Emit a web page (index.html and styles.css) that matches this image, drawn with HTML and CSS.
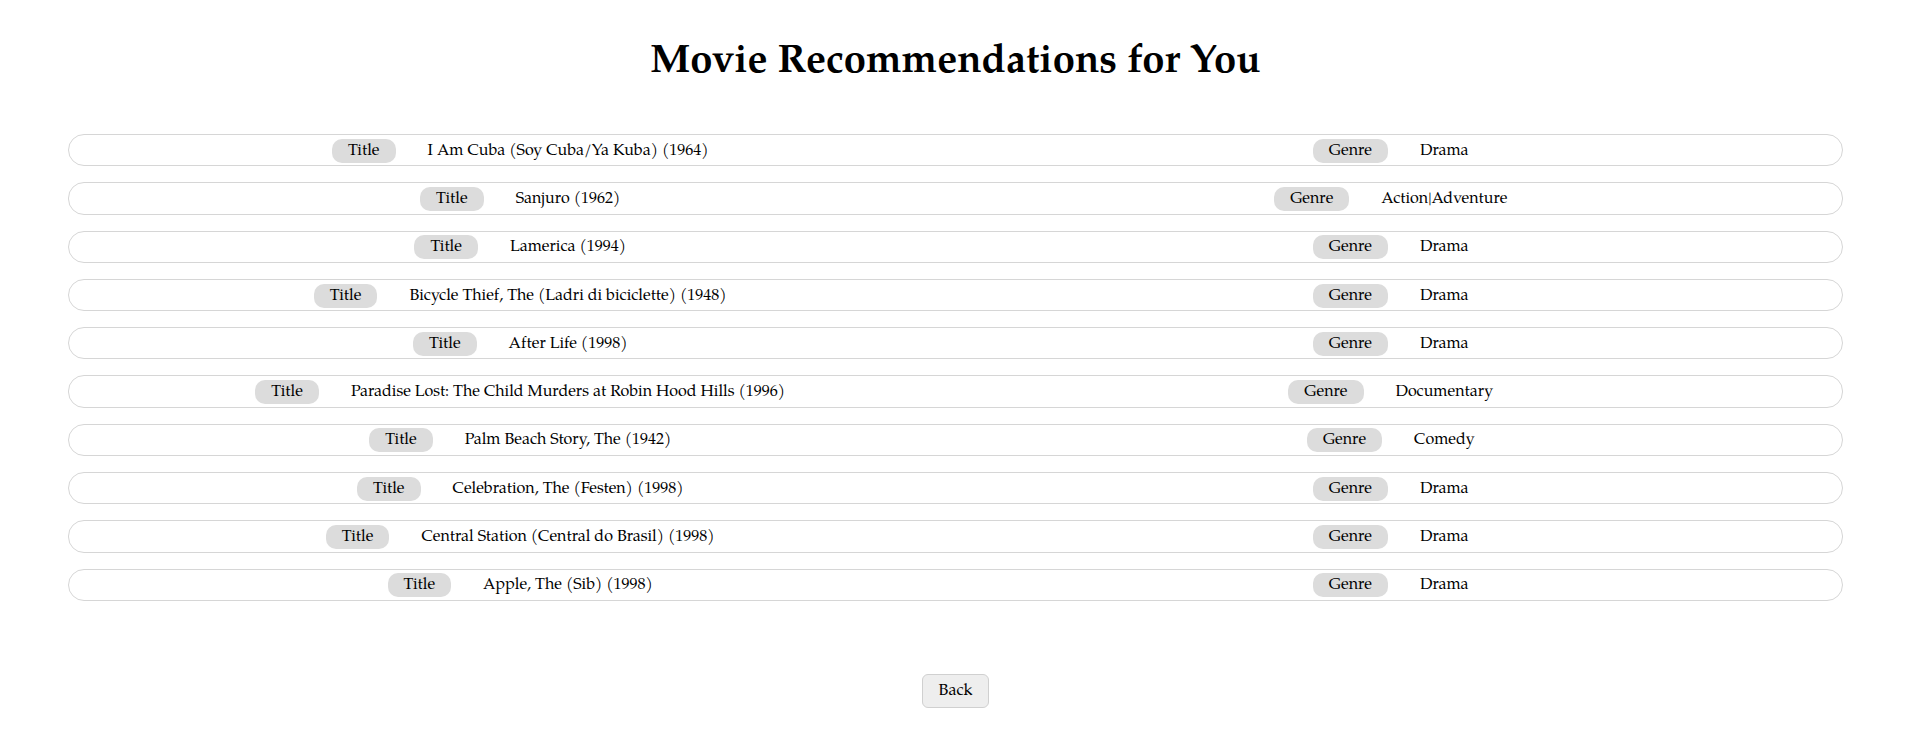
FILE: index.html
```html
<!DOCTYPE html>
<html lang="en">
<head>
<meta charset="utf-8">
<title>Movie Recommendations</title>
<link rel="stylesheet" href="styles.css">
</head>
<body>
<main class="page">
  <h1 class="heading">Movie Recommendations for You</h1>
  <ul class="list">
    <li class="row"><div class="cell"><span class="pill">Title</span><span class="value">I Am Cuba (Soy Cuba/Ya Kuba) (1964)</span></div><div class="cell"><span class="pill">Genre</span><span class="value">Drama</span></div></li>
    <li class="row"><div class="cell"><span class="pill">Title</span><span class="value">Sanjuro (1962)</span></div><div class="cell"><span class="pill">Genre</span><span class="value">Action|Adventure</span></div></li>
    <li class="row"><div class="cell"><span class="pill">Title</span><span class="value">Lamerica (1994)</span></div><div class="cell"><span class="pill">Genre</span><span class="value">Drama</span></div></li>
    <li class="row"><div class="cell"><span class="pill">Title</span><span class="value">Bicycle Thief, The (Ladri di biciclette) (1948)</span></div><div class="cell"><span class="pill">Genre</span><span class="value">Drama</span></div></li>
    <li class="row"><div class="cell"><span class="pill">Title</span><span class="value">After Life (1998)</span></div><div class="cell"><span class="pill">Genre</span><span class="value">Drama</span></div></li>
    <li class="row"><div class="cell"><span class="pill">Title</span><span class="value">Paradise Lost: The Child Murders at Robin Hood Hills (1996)</span></div><div class="cell"><span class="pill">Genre</span><span class="value">Documentary</span></div></li>
    <li class="row"><div class="cell"><span class="pill">Title</span><span class="value">Palm Beach Story, The (1942)</span></div><div class="cell"><span class="pill">Genre</span><span class="value">Comedy</span></div></li>
    <li class="row"><div class="cell"><span class="pill">Title</span><span class="value">Celebration, The (Festen) (1998)</span></div><div class="cell"><span class="pill">Genre</span><span class="value">Drama</span></div></li>
    <li class="row"><div class="cell"><span class="pill">Title</span><span class="value">Central Station (Central do Brasil) (1998)</span></div><div class="cell"><span class="pill">Genre</span><span class="value">Drama</span></div></li>
    <li class="row"><div class="cell"><span class="pill">Title</span><span class="value">Apple, The (Sib) (1998)</span></div><div class="cell"><span class="pill">Genre</span><span class="value">Drama</span></div></li>
  </ul>
  <div class="actions"><button class="back" type="button">Back</button></div>
</main>
</body>
</html>
```
FILE: styles.css
```css
html, body {
  margin: 0;
  padding: 0;
  background: #fff;
}
body {
  font-family: "Palatino Linotype", Palatino, "P052", "TeX Gyre Pagella", "URW Palladio L", "Book Antiqua", "Liberation Serif", serif;
  color: #000;
}
.page {
  display: flex;
  flex-direction: column;
  padding: 0 72px 0 68px;
}
.heading {
  margin: 40px 0 0;
  height: 46px;
  line-height: 46px;
  text-align: center;
  font-size: 40px;
  font-weight: bold;
}
.list {
  list-style: none;
  margin: 48px 0 0;
  padding: 0;
  display: flex;
  flex-direction: column;
  gap: 16px;
}
.row {
  display: flex;
  align-items: center;
  height: 32.3px;
  box-sizing: border-box;
  padding: 1px 16px 0;
  border: 1px solid #d6d6d6;
  border-radius: 16px;
}
.cell {
  flex: 1;
  display: flex;
  justify-content: center;
  align-items: center;
  font-size: 16px;
}
.pill {
  background: #dcdcdc;
  border-radius: 10px;
  padding: 0 16px;
  height: 24px;
  line-height: 24px;
  margin-right: 32px;
}
.actions {
  display: flex;
  justify-content: center;
  margin-top: 73px;
}
.back {
  font-family: inherit;
  font-size: 16px;
  color: #000;
  background: #eeeeee;
  border: 1px solid #d0d0d0;
  border-radius: 6px;
  height: 34px;
  padding: 0 16px;
  cursor: pointer;
}
```
